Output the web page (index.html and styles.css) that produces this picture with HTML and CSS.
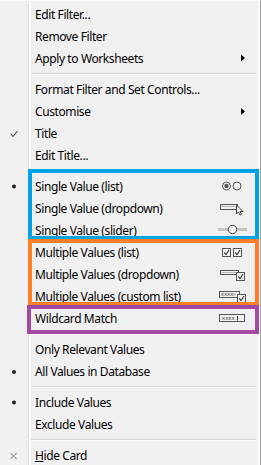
FILE: index.html
```html
<!DOCTYPE html>
<html>
<head>
<meta charset="utf-8">
<link rel="stylesheet" href="styles.css">
</head>
<body>
<div class="menu">
  <div class="row"><span class="gut"></span><span class="label">Edit Filter...</span><span class="icon"></span></div>
  <div class="row"><span class="gut"></span><span class="label">Remove Filter</span><span class="icon"></span></div>
  <div class="row"><span class="gut"></span><span class="label">Apply to Worksheets</span><span class="icon"><svg width="34" height="22" viewBox="0 0 34 22"><polygon points="26,6.5 30,10 26,13.5" fill="#000"/></svg></span></div>
  <div class="sep"></div>
  <div class="row"><span class="gut"></span><span class="label">Format Filter and Set Controls...</span><span class="icon"></span></div>
  <div class="row"><span class="gut"></span><span class="label">Customise</span><span class="icon"><svg width="34" height="22" viewBox="0 0 34 22"><polygon points="26,7 30,10.5 26,14" fill="#000"/></svg></span></div>
  <div class="row"><span class="gut"><svg width="28" height="22" viewBox="0 0 28 22"><path d="M10.5,10.5 L13,13.5 L17.5,8" fill="none" stroke="#444" stroke-width="1.1"/></svg></span><span class="label">Title</span><span class="icon"></span></div>
  <div class="row"><span class="gut"></span><span class="label">Edit Title...</span><span class="icon"></span></div>
  <div class="sep"></div>
  <div class="row"><span class="gut"><svg width="28" height="22" viewBox="0 0 28 22"><circle cx="14" cy="10.5" r="2" fill="#222"/></svg></span><span class="label">Single Value (list)</span><span class="icon"><svg width="34" height="22" viewBox="0 0 34 22"><circle cx="11.5" cy="10" r="4" fill="none" stroke="#555"/><circle cx="11.5" cy="10" r="2.2" fill="#555"/><circle cx="22" cy="10" r="4" fill="none" stroke="#555"/></svg></span></div>
  <div class="row"><span class="gut"></span><span class="label">Single Value (dropdown)</span><span class="icon"><svg width="34" height="22" viewBox="0 0 34 22"><rect x="5.5" y="6.5" width="17" height="5" fill="none" stroke="#555"/><line x1="6" y1="8.5" x2="22" y2="8.5" stroke="#bbb"/><path d="M21.5,7 L21.5,16 L23.5,14 L25,17 L26.5,16.3 L25,13.5 L28,13.5 Z" fill="#f0f0f0" stroke="#444" stroke-linejoin="round"/></svg></span></div>
  <div class="row"><span class="gut"></span><span class="label">Single Value (slider)</span><span class="icon"><svg width="34" height="22" viewBox="0 0 34 22"><rect x="3" y="8" width="29" height="3" fill="#c4c4c4"/><circle cx="17.5" cy="9.5" r="4.2" fill="#f0f0f0" stroke="#444"/></svg></span></div>
  <div class="row"><span class="gut"></span><span class="label">Multiple Values (list)</span><span class="icon"><svg width="34" height="22" viewBox="0 0 34 22"><rect x="7.5" y="6.5" width="8" height="8" fill="#f0f0f0" stroke="#555"/><path d="M9.3,10.5 L11,12.5 L14,8" fill="none" stroke="#444" stroke-width="1.2"/><rect x="18.5" y="6.5" width="8" height="8" fill="#f0f0f0" stroke="#555"/><path d="M20.3,10.5 L22,12.5 L25,8" fill="none" stroke="#444" stroke-width="1.2"/></svg></span></div>
  <div class="row"><span class="gut"></span><span class="label">Multiple Values (dropdown)</span><span class="icon"><svg width="34" height="22" viewBox="0 0 34 22"><rect x="5.5" y="6.5" width="18" height="4" fill="none" stroke="#555"/><line x1="6" y1="8.5" x2="23" y2="8.5" stroke="#bbb"/><rect x="21.5" y="8.5" width="8" height="8" fill="#f0f0f0" stroke="#555"/><path d="M23.3,12.5 L25,14.5 L28,10" fill="none" stroke="#444" stroke-width="1.2"/></svg></span></div>
  <div class="row"><span class="gut"></span><span class="label">Multiple Values (custom list)</span><span class="icon"><svg width="34" height="22" viewBox="0 0 34 22"><rect x="4.5" y="5.5" width="20" height="6" fill="none" stroke="#555"/><text x="5.8" y="10.3" class="tiny">xxxx›</text><rect x="22.5" y="8.5" width="8" height="8" fill="#f0f0f0" stroke="#555"/><path d="M24.3,12.5 L26,14.5 L29,10" fill="none" stroke="#444" stroke-width="1.2"/></svg></span></div>
  <div class="row"><span class="gut"></span><span class="label">Wildcard Match</span><span class="icon"><svg width="34" height="22" viewBox="0 0 34 22"><rect x="4.5" y="6.5" width="25" height="7" fill="none" stroke="#555"/><text x="7" y="12" class="tiny">xxxx</text><line x1="22.5" y1="8" x2="22.5" y2="12.5" stroke="#333"/></svg></span></div>
  <div class="sep"></div>
  <div class="row"><span class="gut"></span><span class="label">Only Relevant Values</span><span class="icon"></span></div>
  <div class="row"><span class="gut"><svg width="28" height="22" viewBox="0 0 28 22"><circle cx="14" cy="11" r="2" fill="#222"/></svg></span><span class="label">All Values in Database</span><span class="icon"></span></div>
  <div class="sep"></div>
  <div class="row"><span class="gut"><svg width="28" height="22" viewBox="0 0 28 22"><circle cx="14" cy="10.5" r="2" fill="#222"/></svg></span><span class="label">Include Values</span><span class="icon"></span></div>
  <div class="row"><span class="gut"></span><span class="label">Exclude Values</span><span class="icon"></span></div>
  <div class="sep"></div>
  <div class="row"><span class="gut"><svg width="28" height="22" viewBox="0 0 28 22"><path d="M10.5,8 L16.5,14 M16.5,8 L10.5,14" stroke="#777" stroke-width="1"/></svg></span><span class="label"><u>H</u>ide Card</span><span class="icon"></span></div>

  <div class="mark mark-blue"></div>
  <div class="mark mark-orange"></div>
  <div class="mark mark-purple"></div>
</div>
</body>
</html>
```

FILE: styles.css
```css
html, body {
  margin: 0;
  padding: 0;
  background: #f0f0f0;
}
.menu {
  position: relative;
  width: 261px;
  height: 465px;
  box-sizing: border-box;
  padding-top: 3px;
  overflow: hidden;
  font-family: "Noto Sans", "Open Sans", sans-serif;
  font-size: 12px;
  letter-spacing: -0.4px;
  color: #000;
  background:
    linear-gradient(to right, #f0f0f0 0 28px, #dcdcdc 28px 29px, #ffffff 29px 31px, transparent 31px),
    #f0f0f0;
  border-top: 1px solid #fbfbfb;
  border-right: 1px solid #a0a0a0;
  box-shadow: inset -2px 0 0 #fafafa;
}
.row {
  display: grid;
  grid-template-columns: 28px 1fr 34px;
  padding-right: 11px;
  height: 22px;
  align-items: center;
}
.gut, .icon {
  height: 22px;
  display: block;
}
.gut svg, .icon svg {
  display: block;
}
.label {
  padding-left: 7px;
  white-space: nowrap;
  line-height: 22px;
}
.sep {
  height: 9px;
  box-sizing: border-box;
  margin-left: 31px;
  margin-right: 4px;
  padding-top: 3px;
}
.sep::before {
  content: "";
  display: block;
  height: 1px;
  background: #d7d7d7;
  border-bottom: 1px solid #fcfcfc;
}
.tiny {
  font-family: "DejaVu Sans", sans-serif;
  font-size: 5.5px;
  letter-spacing: -0.1px;
  fill: #444;
}
.mark {
  position: absolute;
  box-sizing: border-box;
}
.mark-blue {
  left: 28px;
  top: 168px;
  width: 231px;
  height: 70px;
  border: 4px solid #00a2e8;
  border-bottom-width: 3px;
}
.mark-orange {
  left: 28px;
  top: 238px;
  width: 231px;
  height: 67px;
  border: 4px solid #ff7f27;
}
.mark-purple {
  left: 27px;
  top: 304px;
  width: 232px;
  height: 29px;
  border: 4px solid #a349a4;
}
```
